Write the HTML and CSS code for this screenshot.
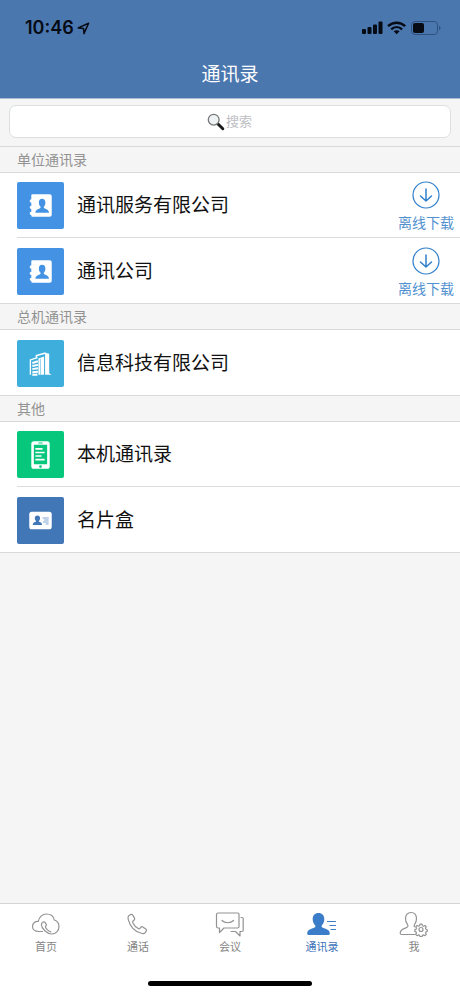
FILE: index.html
```html
<!DOCTYPE html>
<html lang="zh-CN">
<head>
<meta charset="utf-8">
<meta name="viewport" content="width=device-width, initial-scale=1">
<title>通讯录</title>
<link rel="stylesheet" href="styles.css">
</head>
<body>
<svg class="defs" aria-hidden="true">
  <symbol id="book" viewBox="0 0 46 46">
    <path fill="#fff" d="M15 12h17a2 2 0 0 1 2 2v18a2 2 0 0 1-2 2H15a1 1 0 0 1-1-1v-.8a1.600 1.600 0 1 1 0-3.200v-2.600a1.600 1.600 0 1 1 0-3.200v-3a1.600 1.600 0 1 1 0-3.200V13a1 1 0 0 1 1-1z"/>
    <path fill="#4492e4" d="M24.500 16.500c2.200 0 3.300 1.500 3.300 3.700 0 1.700-.7 3-1.500 3.800v1.400c1.300 1 5 1.300 5 4.600H18c0-3.300 3.700-3.600 5-4.600V24c-.9-.8-1.600-2.100-1.600-3.800 0-2.200 1-3.700 3.100-3.700z"/>
  </symbol>
  <symbol id="download" viewBox="0 0 28 28">
    <g fill="none" stroke="#2f7fcb" stroke-linecap="round" stroke-linejoin="round"><circle cx="14" cy="14" r="13" stroke-width="1.200"/><path stroke-width="1.500" d="M14 8v12M8.500 15l5.500 5 5.500-5"/></g>
  </symbol>
</svg>

<header class="header">
  <div class="status">
    <span class="time">10:46</span>
    <svg class="locate" width="13" height="13" viewBox="0 0 13 13"><path d="M1.200 5.900L11.600 1.200 7 11.600 6.600 6.400z" fill="none" stroke="#060b14" stroke-width="1.500" stroke-linejoin="round"/></svg>
    <svg class="signals" width="80" height="16" viewBox="0 0 80 16">
      <g fill="#060b14"><rect x="1" y="9" width="4" height="5" rx="1"/><rect x="6.500" y="7" width="4" height="7" rx="1"/><rect x="12" y="4.500" width="4" height="9.500" rx="1"/><rect x="17.500" y="1.500" width="4" height="12.500" rx="1"/></g>
      <g fill="none" stroke="#060b14" stroke-width="2.400"><path d="M27 6.200c5-4.700 12.200-4.700 17.200 0M30.200 9.400c3.200-3 7.700-3 10.900 0"/></g>
      <path fill="#060b14" d="M32.700 11.300c1.900-1.500 4-1.500 5.900 0l-3 3z"/>
      <rect x="50.500" y="1.500" width="26" height="13" rx="3.500" fill="none" stroke="#2d5280"/>
      <rect x="52" y="3" width="11" height="10" rx="2" fill="#060b14"/>
      <path fill="#2d5280" d="M78 6c2 .6 2 3.600 0 4.200z"/>
    </svg>
  </div>
  <h1 class="title">通讯录</h1>
</header>

<main class="content">
  <form class="search" role="search">
    <input class="search-input" id="q" type="text" placeholder="搜索" aria-label="搜索">
    <svg class="search-icon" width="18" height="18" viewBox="0 0 18 18"><path d="M10.500 10.500l5.300 5.200" stroke="#1c1c1c" stroke-width="3" stroke-linecap="round"/><circle cx="6.700" cy="6.700" r="5.400" fill="#edf2f5" stroke="#777" stroke-width="1.300"/></svg>
  </form>

  <section>
    <h2 class="group">单位通讯录</h2>
    <ul class="list">
      <li class="row">
        <svg class="tile blue"><use href="#book"/></svg>
        <a class="name" href="#">通讯服务有限公司</a>
        <button class="download" type="button"><svg width="28" height="28"><use href="#download"/></svg><span>离线下载</span></button>
      </li>
      <li class="row">
        <svg class="tile blue"><use href="#book"/></svg>
        <a class="name" href="#">通讯公司</a>
        <button class="download" type="button"><svg width="28" height="28"><use href="#download"/></svg><span>离线下载</span></button>
      </li>
    </ul>
  </section>

  <section>
    <h2 class="group">总机通讯录</h2>
    <ul class="list">
      <li class="row">
        <svg class="tile cyan" viewBox="0 0 46 46">
          <g fill="none" stroke="#fff">
            <path stroke-width="1.300" d="M13.100 34V19.500l7-2.300"/>
            <path stroke-width="1.900" d="M15 22.500l5.500-1.700M15 25.500l5.500-1.200M15 28.500l5.500-.8M15 31.500l5.500-.4M15 34h5"/>
            <path stroke-width="1.500" d="M19 17.300v-2l9-2.600"/>
          </g>
          <path fill="#fff" d="M21 18l5.500-1.800V34H21zM27.500 12.500l4 1V31c0 1.500.5 2.200 2 2.400v.6h-6z"/>
          <path stroke="#3eaedc" stroke-width=".5" d="M23 18.500V34"/>
        </svg>
        <a class="name" href="#">信息科技有限公司</a>
      </li>
    </ul>
  </section>

  <section>
    <h2 class="group">其他</h2>
    <ul class="list">
      <li class="row">
        <svg class="tile green" viewBox="0 0 46 46">
          <rect x="14" y="10" width="18" height="27" rx="2.500" fill="#fff"/>
          <path fill="#06c77c" d="M16.500 13.500h13v19h-13zM21 11.300h4v.9h-4z"/><circle cx="23" cy="34.800" r="1.300" fill="#06c77c"/>
          <path stroke="#fff" stroke-width="1.600" d="M18 17.500h7M18 21h9M18 24.500h6M18 28h9"/>
        </svg>
        <a class="name" href="#">本机通讯录</a>
      </li>
      <li class="row">
        <svg class="tile navy" viewBox="0 0 46 46">
          <rect x="12" y="14.500" width="22" height="17" rx="2.500" fill="#fff"/>
          <path fill="#4177b6" d="M20 18c1.700 0 2.600 1.200 2.600 2.700 0 1.200-.5 2-1.200 2.600v.8c1 .6 3.100.8 3.100 3.400h-9c0-2.600 2-2.800 3.100-3.400v-.8c-.7-.6-1.200-1.400-1.200-2.600 0-1.500.9-2.700 2.600-2.700z"/>
          <path stroke="#7fa5d2" stroke-width="1" d="M25 20.500h6M26.500 22.500H31M25.500 24.500H31M28 26.500h3"/>
        </svg>
        <a class="name" href="#">名片盒</a>
      </li>
    </ul>
  </section>
</main>

<nav class="tabs">
  <a class="tab" href="#">
    <svg width="30" height="26" viewBox="0 0 30 26"><path d="M11.500 20.500H7.500C4 20.500 1.500 18.500 1.500 15.500s2.500-5.300 5.800-5C8 6.300 11.300 3 15.500 3c4.200 0 7.100 2.400 7.800 6 2.900.9 4.700 3.400 4.700 6.600 0 4.200-3.200 7.400-7.200 7.400-4.800 0-10.400-5.600-10.400-9.200 0-2.200 2.300-3.600 3.500-2.500l1.500 2.100c.5.800-.7 1.600-1 2.200-.2 1.500 4 5.400 5.400 5.200"/></svg>
    <span>首页</span>
  </a>
  <a class="tab" href="#">
    <svg width="30" height="26" viewBox="0 0 30 26"><path d="M6 4.500l1.700-1c.8-.4 1.700-.2 2.100.6l1.700 3c.4.800.2 1.600-.5 2.100l-1 .8c-.5.500-.5 1-.2 1.700 1.200 2.600 3 4.500 5.400 5.900.7.400 1.300.3 1.700-.2l.8-1c.5-.7 1.400-.8 2.100-.4l3 1.900c.7.500.9 1.300.5 2l-1.100 1.700c-.7 1-1.900 1.200-3.200.9C11.800 20.800 7 15.300 5.200 8.300c-.4-1.600-.3-3 .8-3.800z"/></svg>
    <span>通话</span>
  </a>
  <a class="tab" href="#">
    <svg width="30" height="26" viewBox="0 0 30 26"><path d="M3 2h19.500c.9 0 1.500.6 1.500 1.500v12c0 .9-.6 1.500-1.500 1.500H9l-4.500 4.500V17H3c-.9 0-1.500-.6-1.500-1.500v-12C1.500 2.600 2.100 2 3 2zM7 9.500c2.800 3 8.600 3 11.500 0M26 6.500h1c.7 0 1.200.5 1.200 1.200v11.600c0 .7-.5 1.200-1.200 1.200h-2V25l-4.500-4.500h-4.500"/></svg>
    <span>会议</span>
  </a>
  <a class="tab active" href="#" aria-current="page">
    <svg width="30" height="26" viewBox="0 0 30 26"><path class="solid" d="M11.500 2c3.600 0 5.800 2.500 5.800 6.200 0 2.500-1 4.800-2.600 6.200v1.700c1.300 1.700 8.100 1.700 8.100 6.200 0 1-.4 1.700-1.300 1.700h-20c-.9 0-1.300-.7-1.300-1.700 0-4.500 6.800-4.500 8.100-6.200v-1.700c-1.600-1.400-2.600-3.700-2.600-6.200C5.700 4.500 7.900 2 11.500 2z"/><path d="M20.500 10.500h8M23 14.500h5.500M24 18.500h4.500"/></svg>
    <span>通讯录</span>
  </a>
  <a class="tab" href="#">
    <svg width="30" height="26" viewBox="0 0 30 26"><path d="M16 23.500H2.500c-.9 0-1.300-.6-1.300-1.500 0-4.500 5.800-4.200 7.500-6.300.6-.9.300-1.700-.4-2.600C7.100 11.500 6.500 10 6.500 7.800 6.500 4 8.700 1.500 12 1.500S17.500 4 17.500 7.800c0 2.200-.6 3.700-1.800 5.300-.7.900-.9 1.700-.3 2.600"/><circle cx="22" cy="18.500" r="2"/><path d="M21 13.200h2l.4 1.500 1.200.5 1.400-.8 1.300 1.400-.8 1.300.5 1.100 1.200.5v1.700l-1.200.5-.5 1.100.8 1.300-1.300 1.400-1.400-.8-1.200.5-.4 1.300h-2l-.4-1.300-1.200-.5-1.400.8-1.300-1.400.8-1.300-.5-1.100-1.200-.5v-1.700l1.200-.5.5-1.100-.8-1.300 1.300-1.400 1.400.8 1.200-.5z"/></svg>
    <span>我</span>
  </a>
</nav>
<div class="home"><span class="home-bar"></span></div>
</body>
</html>
```

FILE: styles.css
```css
* { box-sizing: border-box; }

body {
  display: flex;
  flex-direction: column;
  min-height: 100vh;
  margin: 0;
  background: #f5f5f5;
  color: #111;
  font-family: "Liberation Sans", "Noto Sans CJK SC", sans-serif;
}

a { color: inherit; text-decoration: none; }
.defs { display: none; }

.header { background: #4b77af; border-bottom: 1px solid #a9bcd8; }

.status {
  display: flex;
  align-items: center;
  height: 48px;
  padding: 8px 19px 0 25px;
  color: #060b14;
}

.time { font: 600 18px/20px Inter, sans-serif; }
.locate { margin-left: 3px; }
.signals { margin-left: auto; }

.title {
  margin: 0;
  padding: 13px 0 9px;
  color: #fff;
  font-size: 19px;
  font-weight: 400;
  line-height: 28px;
  text-align: center;
}

.content { flex: 1; }

.search { position: relative; padding: 6px 9px 8px; }

.search-input {
  display: block;
  width: 100%;
  height: 33px;
  padding: 0 0 0 18px;
  border: 1px solid #dcdfe2;
  border-radius: 7px;
  background: #fff;
  font-family: inherit;
  font-size: 13px;
  text-align: center;
}

.search-input::placeholder { color: #bdbdc2; opacity: 1; }

.search-icon {
  position: absolute;
  top: 14px;
  left: calc(50% - 23px);
  fill: none;
  pointer-events: none;
}

.group {
  height: 27px;
  margin: 0;
  padding: 1px 0 0 17px;
  border: solid #d9d9d9;
  border-width: 1px 0;
  color: #929292;
  font-size: 14px;
  font-weight: 400;
  line-height: 25px;
}

.list { margin: 0; padding: 0; background: #fff; list-style: none; }

.row {
  display: flex;
  align-items: center;
  height: 65px;
  margin-left: 17px;
  padding: 1px 6px 0 0;
}

.row:not(:last-child) { border-bottom: 1px solid #dcdcdc; }
section:last-child .list { border-bottom: 1px solid #d9d9d9; }

.tile { flex: none; width: 47px; height: 47px; border-radius: 2px; }
.blue { background: #4492e4; }
.cyan { background: #3eaedc; }
.green { background: #06c77c; }
.navy { background: #4177b6; }

.name { flex: 1; margin-left: 13px; padding-top: 1px; font-size: 19px; line-height: 28px; }

.download {
  display: flex;
  flex-direction: column;
  align-items: center;
  gap: 4px;
  padding: 3px 0 0;
  border: 0;
  background: none;
  color: #5291cf;
  font-family: inherit;
  font-size: 14px;
  line-height: 20px;
}

.tabs {
  display: grid;
  grid-template-columns: repeat(5, 1fr);
  border-top: 1px solid #d4d4d4;
  background: #fff;
}

.tab {
  display: flex;
  flex-direction: column;
  align-items: center;
  gap: 2px;
  padding-top: 7px;
  color: #858585;
  font-size: 11px;
  line-height: 16px;
}

.tab svg { fill: none; stroke: #939393; stroke-width: 1.2; stroke-linejoin: round; stroke-linecap: round; }
.tab.active { color: #3f74b8; }
.tab.active svg { stroke: #3b7dc8; }
.tab .solid { fill: #3b7dc8; stroke: none; }

.home { display: flex; justify-content: center; padding: 26px 0 10px; background: #fff; }
.home-bar { width: 164px; height: 5px; border-radius: 3px; background: #000; }
```
